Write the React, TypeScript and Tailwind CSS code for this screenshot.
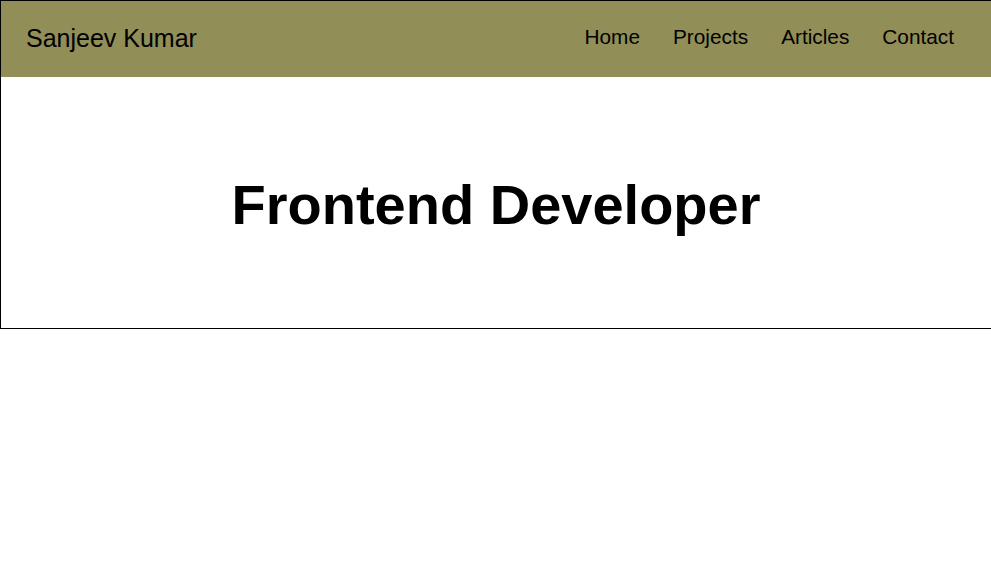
export default function App() {
  return (
    <div className="font-['Liberation_Sans',Arial,sans-serif] text-black bg-white min-h-screen">
      <div className="border-t border-l border-b border-black">
        <header className="h-[76px] bg-[#918e58] flex items-center justify-between pl-[25px] pr-[37px]">
          <div className="text-[25px] pb-[1px]">Sanjeev Kumar</div>
          <nav className="flex gap-[33px] text-[20.8px] pb-[4px]">
            <a href="#">Home</a>
            <a href="#">Projects</a>
            <a href="#">Articles</a>
            <a href="#">Contact</a>
          </nav>
        </header>
        <section className="h-[251px] flex items-center justify-center pt-[4px]">
          <h1 className="text-[56px] font-bold">Frontend Developer</h1>
        </section>
      </div>
    </div>
  );
}
